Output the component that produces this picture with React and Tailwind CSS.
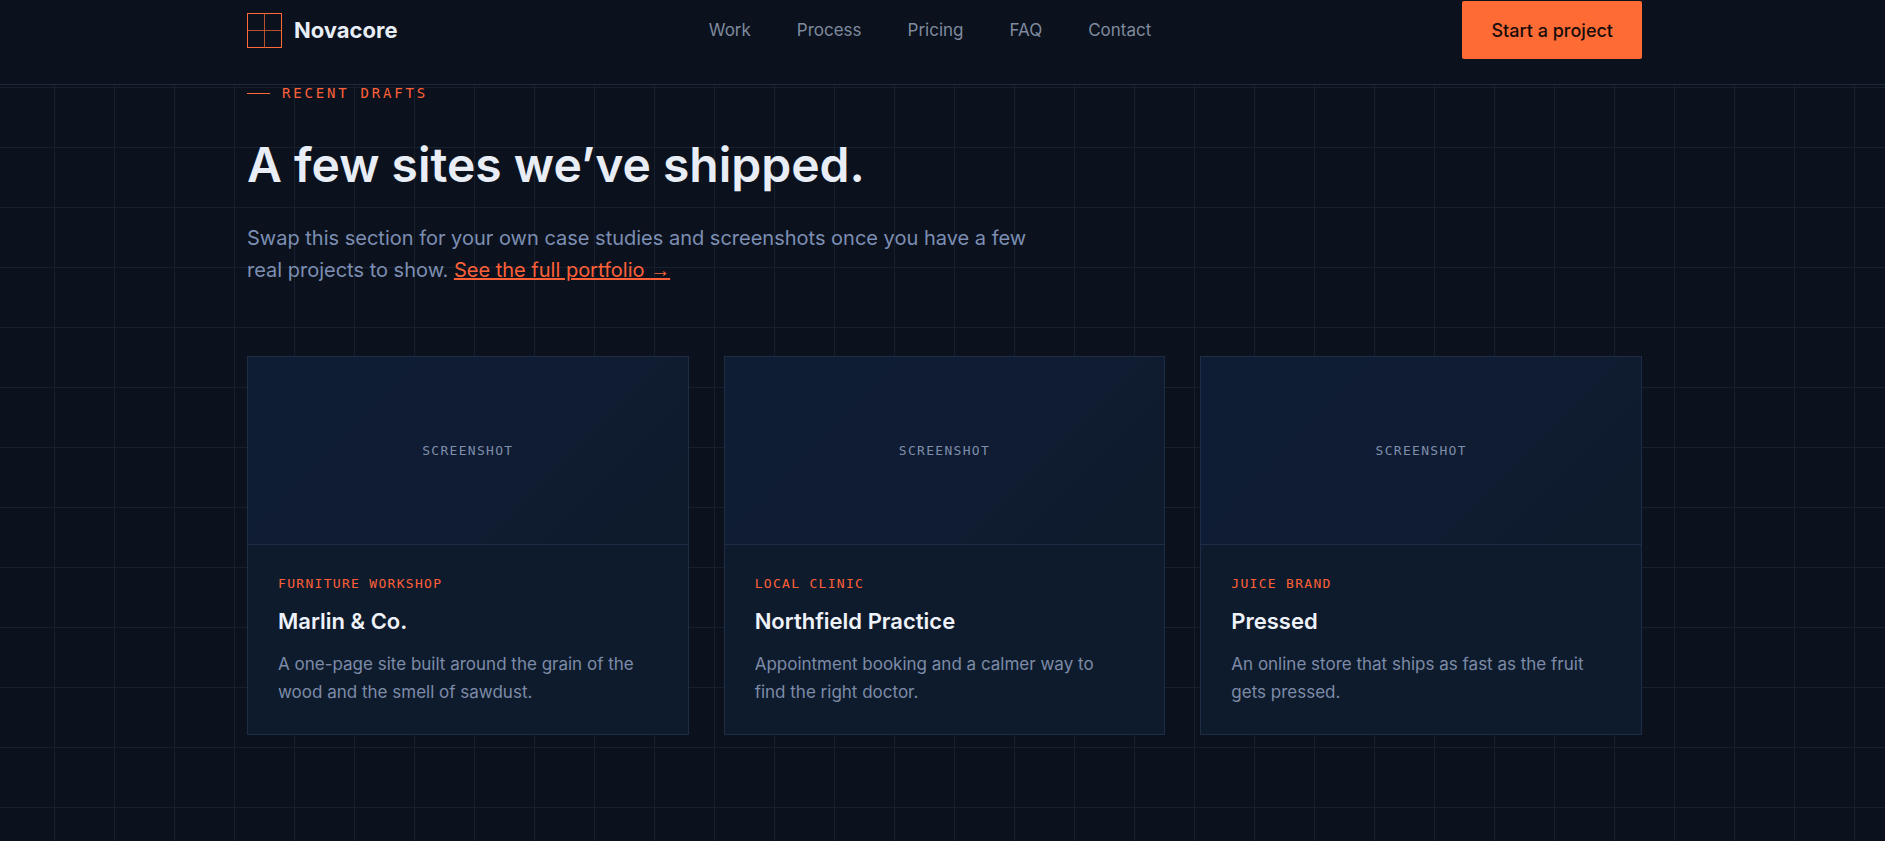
const links = ["Work", "Process", "Pricing", "FAQ", "Contact"];

const projects = [
  {
    tag: "Furniture workshop",
    title: "Marlin & Co.",
    text: "A one-page site built around the grain of the wood and the smell of sawdust.",
  },
  {
    tag: "Local clinic",
    title: "Northfield Practice",
    text: "Appointment booking and a calmer way to find the right doctor.",
  },
  {
    tag: "Juice brand",
    title: "Pressed",
    text: "An online store that ships as fast as the fruit gets pressed.",
  },
];

const Logo = () => (
  <svg width="35" height="35" viewBox="0 0 35 35" fill="none" stroke="#ff6b35" aria-hidden="true">
    <rect x="0.5" y="0.5" width="34" height="34" />
    <path d="M17.5 0v35M0 17.5h35" strokeOpacity="0.7" />
  </svg>
);

const Header = () => (
  <header className="bg-[#0b121e] border-b border-[#1c2939] pl-1 pt-px pb-[25px]">
    <div className="max-w-[1395px] mx-auto flex items-center justify-between">
      <a href="#top" className="flex items-center gap-3 text-[22px] leading-7 font-bold text-[#e8edf6]">
        <Logo />
        Novacore
      </a>

      <nav className="flex gap-[46px] text-[17px] leading-6 text-[#7f8a9d]">
        {links.map((name) => (
          <a key={name} href={`#${name.toLowerCase()}`} className="hover:text-white">
            {name}
          </a>
        ))}
      </nav>

      <button
        type="button"
        className="h-[58px] px-[29px] rounded-[2px] bg-[#ff6b35] text-[18px] font-medium text-[#160d0c] cursor-pointer"
      >
        Start a project
      </button>
    </div>
  </header>
);

const ProjectCard = ({ tag, title, text }) => (
  <article className="bg-[#0e1b2c] border border-[#1e2d45]">
    <div className="h-[188px] flex items-center justify-center border-b border-[#1e2d45] bg-linear-135 from-[#0f1d34] via-[#0f1c33] to-[#0e1b2c]">
      <span className="font-['DejaVu_Sans_Mono',monospace] text-[13px] tracking-[0.1em] uppercase text-[#7f8eab]">
        Screenshot
      </span>
    </div>
    <div className="px-[30px] pt-[29px] pb-7">
      <p className="font-['DejaVu_Sans_Mono',monospace] text-[13px] leading-5 tracking-[0.1em] uppercase text-[#ff6038]">
        {tag}
      </p>
      <h3 className="mt-[13px] text-[22px] leading-7 font-semibold text-[#eef2f9]">{title}</h3>
      <p className="mt-[15px] pr-2 text-[17px] leading-7 text-[#7d8ba8]">{text}</p>
    </div>
  </article>
);

const App = () => {
  return (
    <div
      id="top"
      className="min-h-screen bg-[#0b121e] bg-[linear-gradient(to_right,#17212e_1px,transparent_1px),linear-gradient(to_bottom,#17212e_1px,transparent_1px)] bg-[size:60px_60px] bg-[position:54px_27px] font-[Inter,sans-serif]"
    >
      <Header />

      <main className="pl-1 pb-24">
        <section id="work" className="max-w-[1395px] mx-auto">
          <p className="flex items-center gap-3 font-['DejaVu_Sans_Mono',monospace] text-[14px] leading-4 tracking-[0.2em] uppercase text-[#ff6038]">
            <span className="w-[23px] h-px bg-[#ff6b35]" />
            Recent drafts
          </p>
          <h2 className="mt-9 text-[48px] leading-14 font-semibold text-[#e8edf6]">
            A few sites we’ve shipped.
          </h2>
          <p className="mt-[29px] max-w-[800px] text-[20px] leading-8 text-[#7d8eb2]">
            Swap this section for your own case studies and screenshots once you have a few real
            projects to show.{" "}
            <a href="#portfolio" className="text-[#ff6038] underline decoration-2">
              See the full portfolio <span className="font-['Liberation_Sans',sans-serif]">→</span>
            </a>
          </p>

          <div className="mt-[70px] grid grid-cols-3 gap-[35px]">
            {projects.map((project) => (
              <ProjectCard key={project.title} {...project} />
            ))}
          </div>
        </section>
      </main>
    </div>
  );
};

export default App;
